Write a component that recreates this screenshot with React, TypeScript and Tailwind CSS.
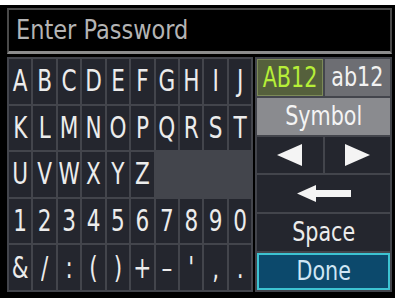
import React from 'react';

const rows: string[][] = [
  ['A', 'B', 'C', 'D', 'E', 'F', 'G', 'H', 'I', 'J'],
  ['K', 'L', 'M', 'N', 'O', 'P', 'Q', 'R', 'S', 'T'],
  ['U', 'V', 'W', 'X', 'Y', 'Z'],
  ['1', '2', '3', '4', '5', '6', '7', '8', '9', '0'],
  ['&', '/', ':', '(', ')', '+', '-', "'", ',', '.'],
];

const font = "font-['DejaVu_Sans',sans-serif] font-stretch-condensed";

function Key({ label }: { label: string }) {
  return (
    <div className="flex items-center justify-center bg-[#24262e]">
      <span className={`${font} inline-block scale-y-[1.28] text-[24px] leading-none text-[#ececec]`}>
        {label === '-' ? '\u2013' : label}
      </span>
    </div>
  );
}

function Label({ children, className = '' }: { children: React.ReactNode; className?: string }) {
  return (
    <span className={`${font} inline-block scale-y-[1.12] text-[23px] leading-none ${className}`}>
      {children}
    </span>
  );
}

export default function App() {
  return (
    <div className="h-[301px] w-[395px] bg-white pt-[5px]">
      <div className="flex h-[293px] flex-col bg-black pl-[7px] pr-[3px] pt-[3px]">
        <div className="flex h-[46px] items-center border-2 border-b-[3px] border-[#4a4a4a] border-b-[#8c8c8c] bg-black pl-[7px]">
          <span className={`${font} inline-block scale-y-[1.05] text-[25px] leading-none text-[#b4b4b4]`}>Enter Password</span>
        </div>

        <div className="mt-[3px] flex h-[235px] gap-[2px]">
          <div className="grid w-[247px] grid-cols-10 grid-rows-5 gap-[2px] bg-[#43454c] p-[2px]">
            {rows.map((row, r) =>
              row.map((k, c) => (
                <div key={`${r}-${c}`} style={{ gridRow: r + 1, gridColumn: c + 1 }} className="grid">
                  <Key label={k} />
                </div>
              ))
            )}
          </div>

          <div className="grid w-[137px] grid-cols-2 grid-rows-6 gap-[2px] bg-[#43454c] p-[2px]">
            <div className="flex items-center justify-center border border-[#7c8a58] bg-[#55603c]">
              <Label className="scale-y-[1.25] text-[#b6ef38]">AB12</Label>
            </div>
            <div className="flex items-center justify-center bg-[#6d6e73]">
              <Label className="scale-y-[1.2] text-[#f2f2f2]">ab12</Label>
            </div>
            <div className="col-span-2 flex items-center justify-center bg-[#8a8b8f]">
              <Label className="text-[#f4f4f4]">Symbol</Label>
            </div>
            <div className="flex items-center justify-center bg-[#24262e]">
              <svg width="26" height="22" viewBox="0 0 26 22">
                <polygon points="25,0 25,22 0,11" fill="#f4f4f4" />
              </svg>
            </div>
            <div className="flex items-center justify-center bg-[#24262e]">
              <svg width="26" height="22" viewBox="0 0 26 22">
                <polygon points="1,0 1,22 26,11" fill="#f4f4f4" />
              </svg>
            </div>
            <div className="col-span-2 flex items-center justify-center bg-[#24262e]">
              <svg width="54" height="17" viewBox="0 0 54 17">
                <polygon points="0,8.5 19,0 19,5 54,5 54,12 19,12 19,17" fill="#f4f4f4" />
              </svg>
            </div>
            <div className="col-span-2 flex items-center justify-center bg-[#24262e]">
              <Label className="text-[#ececec]">Space</Label>
            </div>
            <div className="col-span-2 flex items-center justify-center border-2 border-[#3dc3d2] bg-[#0c496c]">
              <Label className="text-[#cfe6f4]">Done</Label>
            </div>
          </div>
        </div>
      </div>
    </div>
  );
}
